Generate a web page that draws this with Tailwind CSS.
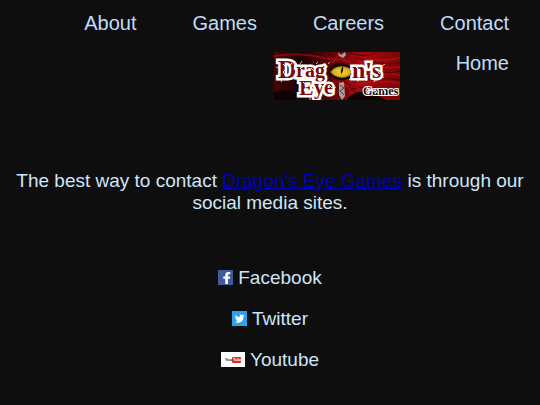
<!DOCTYPE html>
<html lang="en">
  <head>
    <meta charset="UTF-8" />
    <meta name="viewport" content="width=device-width, initial-scale=1.0" />
    <script src="https://cdn.jsdelivr.net/npm/@tailwindcss/browser@4"></script>
    <title>Dragon's Eye Games - Contact</title>
  </head>
  <body
    class="min-h-screen bg-[#0e0e0e] font-['Liberation_Sans',Arial,sans-serif] text-[19px] leading-[22px] text-[#cfe5f8]"
  >
    <nav class="pt-3 pr-[31px] text-xl leading-[23px] text-[#c1dcfa]">
      <ul class="flex flex-wrap items-start justify-end gap-x-14 gap-y-[17px]">
        <li><a href="#about">About</a></li>
        <li><a href="#games">Games</a></li>
        <li><a href="#careers">Careers</a></li>
        <li><a href="#contact">Contact</a></li>
        <li>
          <a href="#home" aria-label="Dragon's Eye Games">
            <svg class="block h-12 w-[126px]" viewBox="0 0 126 48">
              <defs>
                <linearGradient id="scales">
                  <stop offset="0" stop-color="#4a0406" />
                  <stop offset="0.2" stop-color="#180203" />
                  <stop offset="0.45" stop-color="#5a0607" />
                  <stop offset="0.72" stop-color="#a8090c" />
                  <stop offset="1" stop-color="#780507" />
                </linearGradient>
                <radialGradient id="iris">
                  <stop offset="0" stop-color="#f7d532" />
                  <stop offset="0.7" stop-color="#e0b01c" />
                  <stop offset="1" stop-color="#8a6008" />
                </radialGradient>
              </defs>
              <rect width="126" height="48" fill="url(#scales)" />
              <!-- scales -->
              <g fill="none" stroke-linecap="round">
                <path d="M0 4Q25 0 45 5T64 2M78 2Q95 12 126 6M84 9Q104 18 126 15M100 25Q113 19 126 23M80 33Q99 27 126 31" stroke="#c11216" stroke-width="2" opacity="0.5" />
                <path d="M72 0Q92 7 102 1M82 5Q104 14 126 11M92 17Q112 24 126 19M76 29Q98 24 126 28M73 38Q96 31 126 42" stroke="#3b0405" opacity="0.8" />
                <path d="M58 10Q66 4 77 11M73 28Q81 31 91 46M64 30Q76 32 80 48" stroke="#a60c0e" stroke-width="2" />
              </g>
              <path d="M0 40Q16 34 31 48H0ZM72 48Q85 31 112 48Z" fill="#100102" />
              <!-- eye -->
              <path d="M53 21Q58 9 69 11Q78 13 81 21Q78 28 68 28Q59 28 53 21Z" fill="#170405" />
              <path d="M56 20Q61 14 68 14Q76 15 79 19Q76 26 68 26Q60 25 56 20Z" fill="url(#iris)" />
              <path d="M69 14Q66 18 67 22Q70 19 69 14Z" fill="#1c1203" />
              <!-- sword behind the eye -->
              <path d="M64 0L67 3L71 0L72 3L69 6L65 4ZM65 31L70 30L71 44L68 48L65 43Z" fill="#a7a0a0" />
              <path d="M66 33L70 36L66 39L70 43" fill="none" stroke="#493c3c" />
              <!-- splatter round the lettering -->
              <g fill="none" stroke="#fff" stroke-opacity="0.7">
                <path d="M6 9L8 12M4 16L2 15M5 23L3 25M8 27L7 30M13 7V10M26 12L28 9M42 12L44 10M54 12L56 10" />
                <path d="M27 37L24 38M29 42L27 45M36 45V48M46 45L47 48M60 36L62 35" />
                <path d="M77 26L75 28M84 27V30M91 27L93 29M108 14L111 12M108 24L110 26M101 27L100 30" />
              </g>
              <g
                class="font-['Liberation_Serif',serif] font-bold"
                stroke="#fff"
                paint-order="stroke"
                stroke-linejoin="miter"
              >
                <g fill="#7a0a0c" stroke-width="5">
                  <text x="4" y="26" font-size="26">D</text>
                  <text x="22" y="25" font-size="20">rag</text>
                  <text x="25" y="43" font-size="22">E</text>
                  <text x="40" y="42" font-size="20">ye</text>
                  <text x="78" y="26" font-size="24">n's</text>
                </g>
                <text x="89" y="43" font-size="12" fill="#180303" stroke-width="2">Games</text>
              </g>
              <!-- blackletter cuts -->
              <path d="M9 12L13 16L9 20L13 25M18 11L15 15M26 16L29 19M37 16L40 19M49 16L52 19M29 30L33 34L30 38L33 42M46 32L49 35M55 33L58 36M82 15L85 18M91 15L94 18M101 16L106 22M93 35L96 41M101 37L103 41M109 37L112 41" fill="none" stroke="#fff" />
            </svg>
          </a>
        </li>
        <li><a href="#home">Home</a></li>
      </ul>
    </nav>
    <main class="px-4 pt-[70px] text-center">
      <p>
        The best way to contact
        <a href="#home" class="text-[#0000b8] underline">Dragon's Eye Games</a>
        is through our social media sites.
      </p>
      <ul class="mt-[53px] flex flex-col items-center gap-[19px]">
        <li>
          <a href="#facebook" class="flex items-center gap-[5px]">
            <svg class="mb-[2px] size-[15px]" viewBox="0 0 15 15">
              <rect width="15" height="15" fill="#3e5b9a" />
              <path d="M7.3 14V8.8H5.3V6.5H7.3V5Q7.3 2 10.2 2H12.3V4.3H11Q9.9 4.3 9.9 5.4V6.5H12.2L11.8 8.8H9.9V14Z" fill="#fff" />
            </svg>
            Facebook
          </a>
        </li>
        <li>
          <a href="#twitter" class="flex items-center gap-[5px]">
            <svg class="mb-[2px] size-[15px]" viewBox="0 0 15 15">
              <rect width="15" height="15" fill="#2ca3e8" />
              <path d="M3.4 4.1Q5 6.1 7.5 6.2Q7.2 3.8 9.3 3.6Q10.2 3.6 10.8 4.2L12 3.8L11.4 4.9L12.4 4.7L11.5 5.7Q11.5 9 9.3 10.7Q6.5 12.7 3 10.9Q4.8 10.9 5.8 10Q4.4 9.8 4 8.6H4.8Q3.2 8 3.2 6.4L4 6.6Q2.7 5.5 3.4 4.1Z" fill="#fff" />
            </svg>
            Twitter
          </a>
        </li>
        <li>
          <a href="#youtube" class="flex items-center gap-[5px]">
            <svg
              class="mb-[2px] h-[15px] w-6 font-['Liberation_Sans',sans-serif] font-bold"
              viewBox="0 0 24 15"
            >
              <rect width="24" height="15" fill="#fff" />
              <rect x="11" y="5" width="9" height="6" rx="1" fill="#d92b2b" />
              <text x="4" y="9" font-size="4" fill="#222">You</text>
              <text x="12" y="9" font-size="4" fill="#fff">Tube</text>
            </svg>
            Youtube
          </a>
        </li>
      </ul>
    </main>
  </body>
</html>
